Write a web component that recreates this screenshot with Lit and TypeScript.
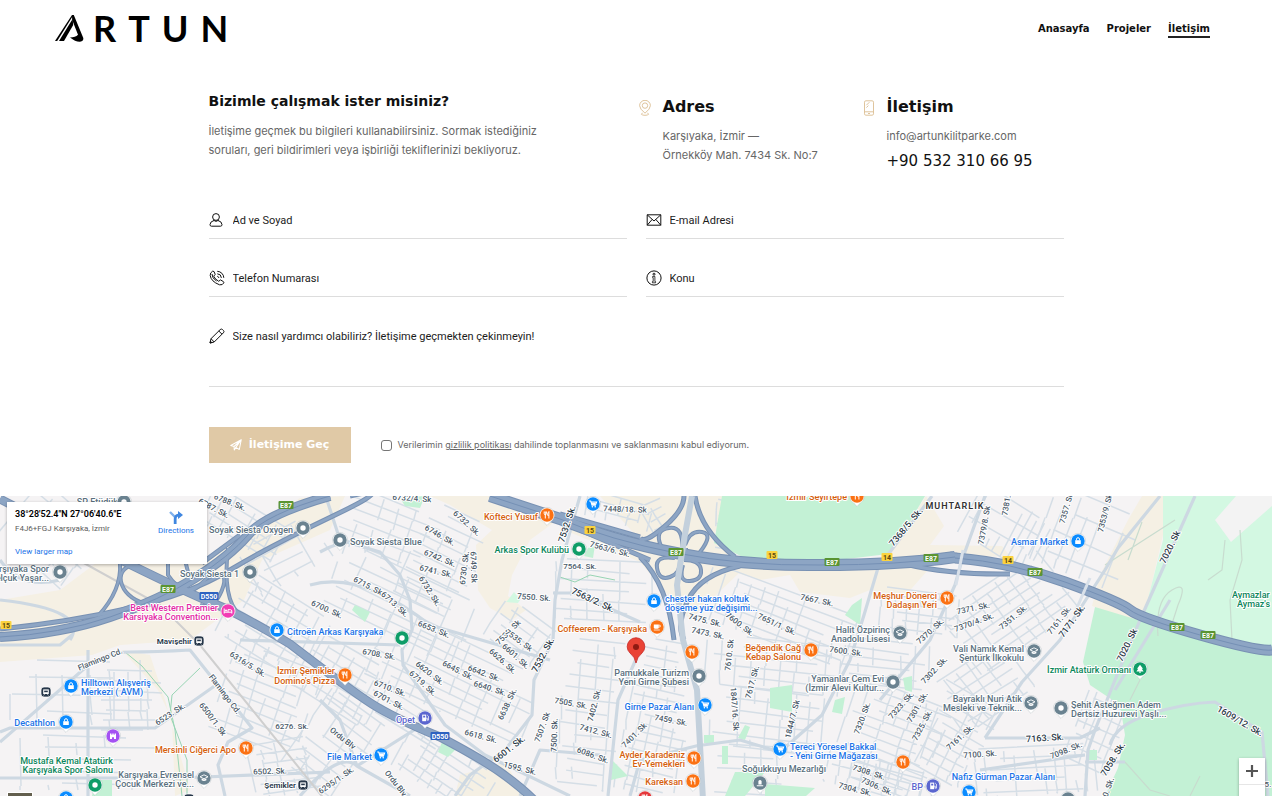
import { LitElement, html, css, svg } from "lit";
import { customElement } from "lit/decorators.js";

type Tone = "blue" | "orange" | "grey" | "green" | "pink" | "indigo" | "purple" | "red";
type Glyph = "bag" | "cart" | "fork" | "dot" | "school" | "bed" | "cup" | "fuel" | "tree" | "castle" | "grave";

const PIN_FILL: Record<Tone, string> = {
  blue: "#0a8bff", orange: "#fb7113", grey: "#6a8290", green: "#0f9d68",
  pink: "#f23cb4", indigo: "#5b66cf", purple: "#a451f2", red: "#e5383b",
};
const TEXT_FILL: Record<Tone, string> = {
  blue: "#1a73e8", orange: "#d5600d", grey: "#5a707e", green: "#0b855a",
  pink: "#e32aa5", indigo: "#5b66cf", purple: "#8a3fd6", red: "#c5221f",
};

const GLYPHS: Record<Glyph, unknown> = {
  bag: svg`<path d="M-2.8 -.8h5.6v3.8h-5.6z" fill="#fff"/><path d="M-1.5 -.8v-1a1.5 1.5 0 0 1 3 0v1" fill="none" stroke="#fff" stroke-width="1"/>`,
  cart: svg`<path d="M-3.8 -3h1.5l1.3 4.2h3.4l1.2-3.2h-5.2" fill="none" stroke="#fff" stroke-width="1.1"/><path d="M-1.6 -1.5h4.6l-.8 2.4h-3.2z" fill="#fff"/><circle cx="-.6" cy="2.8" r=".8" fill="#fff"/><circle cx="2.2" cy="2.8" r=".8" fill="#fff"/>`,
  fork: svg`<path d="M-2.8 -3.5v2.2q0 1 1.1 1t1.1-1v-2.2M-1.7 -3.5v7M1.9 3.5v-7q-1.3 1-1.3 3.8h1.3" fill="none" stroke="#fff" stroke-width="1"/>`,
  dot: svg`<circle r="2.7" fill="#fff"/>`,
  school: svg`<path d="M-4 -1.2l4-2 4 2-4 2z" fill="none" stroke="#fff" stroke-width=".9"/><path d="M-2.4 .5v1.7q2.4 1.6 4.8 0v-1.7l-2.4 1z" fill="#fff"/>`,
  bed: svg`<path d="M-3.8 -2.5v5M-3.8 1.2h7.6M3.8 2.5v-2.5q0-1.3-1.3-1.3h-2.5v2.3" fill="none" stroke="#fff" stroke-width="1"/><circle cx="-2" cy="-.6" r="1" fill="#fff"/>`,
  cup: svg`<path d="M-3.2 -2.5h5v2.7q0 1.5-1.5 1.5h-2q-1.5 0-1.5-1.5z" fill="#fff"/><path d="M1.8 -1.8h1.4v1.8h-1.4M-3.2 3h6" fill="none" stroke="#fff" stroke-width=".8"/>`,
  fuel: svg`<path d="M-2.8 -3.4h4v6.6h-4z" fill="#fff"/><path d="M-1.8 -2.3h2v1.8h-2z" fill="#5b66cf"/><path d="M1.2 .2h1v2h1.2v-4l-1.2-1.2" fill="none" stroke="#fff" stroke-width=".8"/>`,
  tree: svg`<path d="M0 -4.2l3 4h-1.2l1.8 2.6h-7.2l1.8-2.6h-1.2z" fill="#fff"/><path d="M-.6 2.2h1.2v1.8h-1.2z" fill="#fff"/>`,
  castle: svg`<path d="M-3 3v-5.5h1.4v1.2h.9v-1.2h1.4v1.2h.9v-1.2h1.4v5.5h-2v-1.6q-1-1-2 0v1.6z" fill="#fff"/>`,
  grave: svg`<path d="M-1.6 1.6v-3.6q1.6-2 3.2 0v3.6zM-3.2 2.2h6.4v1h-6.4z" fill="#fff"/>`,
};

const PINS: [number, number, Tone, Glyph][] = [
  [124, 502, "grey", "dot"], [303, 528, "grey", "dot"], [250, 572, "grey", "dot"], [60, 572, "grey", "dot"],
  [228, 611, "pink", "bed"], [277, 630, "blue", "bag"], [402, 638, "green", "dot"], [71, 686, "blue", "bag"],
  [66, 722, "blue", "bag"], [113, 736, "purple", "castle"], [246, 748, "orange", "fork"], [95, 785, "green", "dot"],
  [204, 778, "grey", "school"], [66, 798, "blue", "bag"], [345, 675, "orange", "fork"], [547, 515, "orange", "fork"],
  [340, 540, "grey", "dot"], [579, 549, "green", "dot"], [593, 504, "blue", "cart"], [657, 627, "orange", "cup"],
  [425, 718, "indigo", "fuel"], [381, 755, "blue", "cart"], [699, 676, "grey", "dot"], [705, 705, "blue", "cart"],
  [694, 758, "orange", "fork"], [693, 781, "orange", "fork"], [645, 798, "red", "fork"], [857, 496, "orange", "fork"],
  [654, 601, "blue", "bag"], [947, 598, "orange", "fork"], [900, 633, "grey", "school"], [692, 652, "orange", "fork"],
  [811, 650, "orange", "fork"], [893, 682, "grey", "dot"], [780, 749, "blue", "cart"], [903, 762, "orange", "fork"],
  [760, 783, "grey", "grave"], [933, 786, "indigo", "fuel"], [1078, 541, "blue", "bag"], [1034, 651, "grey", "school"],
  [1140, 669, "green", "tree"], [1031, 703, "grey", "school"], [1061, 708, "grey", "dot"], [969, 792, "blue", "cart"],
  [1068, 799, "grey", "dot"],
];

/* Place names: text, x, y, tone, anchor */
const PLACES: [string, number, number, Tone, "start" | "end" | "middle"][] = [
  ["SP Etüdük", 118, 505, "grey", "end"],
  ["Soyak Siesta Oxygen", 293, 533, "grey", "end"],
  ["Soyak Siesta 1", 239, 577, "grey", "end"],
  ["Karşıyaka Spor", 49, 572, "grey", "end"], ["Selçuk Yaşar...", 49, 581, "grey", "end"],
  ["Best Western Premier", 218, 611, "pink", "end"], ["Karsiyaka Convention...", 218, 620, "pink", "end"],
  ["Citroën Arkas Karşıyaka", 287, 635, "blue", "start"],
  ["Hilltown Alışveriş", 81, 686, "blue", "start"], ["Merkezi ( AVM)", 81, 695, "blue", "start"],
  ["Decathlon", 55, 726, "blue", "end"],
  ["Mersinli Ciğerci Apo", 236, 753, "orange", "end"],
  ["Mustafa Kemal Atatürk", 113, 764, "green", "end"], ["Karşıyaka Spor Salonu", 113, 773, "green", "end"],
  ["Karşıyaka Evrensel", 194, 778, "grey", "end"], ["Çocuk Merkezi ve...", 194, 787, "grey", "end"],
  ["İzmir Şemikler", 335, 674, "orange", "end"], ["Domino's Pizza", 335, 684, "orange", "end"],
  ["Köfteci Yusuf", 538, 520, "orange", "end"],
  ["Soyak Siesta Blue", 350, 545, "grey", "start"],
  ["Arkas Spor Kulübü", 569, 553, "green", "end"],
  ["Coffeerem - Karşıyaka", 647, 632, "orange", "end"],
  ["Opet", 415, 723, "indigo", "end"],
  ["File Market", 372, 760, "blue", "end"],
  ["Pamukkale Turizm", 689, 676, "grey", "end"], ["Yeni Girne Şubesi", 689, 685, "grey", "end"],
  ["Girne Pazar Alanı", 694, 710, "blue", "end"],
  ["Ayder Karadeniz", 685, 758, "orange", "end"], ["Ev-Yemekleri", 685, 767, "orange", "end"],
  ["Kareksan", 683, 785, "orange", "end"],
  ["İzmir Seyirtepe", 847, 500, "orange", "end"],
  ["chester hakan koltuk", 665, 602, "blue", "start"], ["döşeme yüz değişimi...", 665, 611, "blue", "start"],
  ["Meşhur Dönerci", 937, 599, "orange", "end"], ["Dadaşın Yeri", 937, 608, "orange", "end"],
  ["Halit Özpirinç", 890, 633, "grey", "end"], ["Anadolu Lisesi", 890, 642, "grey", "end"],
  ["Beğendik Cağ", 801, 651, "orange", "end"], ["Kebap Salonu", 801, 660, "orange", "end"],
  ["Yamanlar Cem Evi", 884, 682, "grey", "end"], ["(İzmir Alevi Kultur...", 884, 691, "grey", "end"],
  ["Tereci Yöresel Bakkal", 790, 750, "blue", "start"], ["- Yeni Girne Mağazası", 790, 759, "blue", "start"],
  ["Soğukkuyu Mezarlığı", 784, 772, "grey", "middle"],
  ["BP", 923, 790, "indigo", "end"],
  ["Asmar Market", 1068, 545, "blue", "end"],
  ["Aymazlar", 1232, 598, "green", "start"], ["Aymaz's", 1237, 607, "green", "start"],
  ["Vali Namık Kemal", 1024, 652, "grey", "end"], ["Şentürk İlkokulu", 1024, 661, "grey", "end"],
  ["İzmir Atatürk Ormanı", 1131, 673, "green", "end"],
  ["Bayraklı Nuri Atik", 1022, 702, "grey", "end"], ["Mesleki ve Teknik...", 1022, 711, "grey", "end"],
  ["Şehit Asteğmen Adem", 1071, 708, "grey", "start"], ["Dertsiz Huzurevi Yaşlı...", 1071, 717, "grey", "start"],
  ["Nafiz Gürman Pazar Alanı", 1055, 780, "blue", "end"],
];

/* Street names: text, centre x, centre y, angle */
const STREETS: [string, number, number, number][] = [
  ["6788. Sk.", 230, 502, 22], ["6787. Sk.", 214, 508, 28], ["Flamingo Cd.", 100, 659, -22], ["Flamingo Cd.", 225, 694, 53],
  ["6316/5. Sk.", 248, 664, 32], ["6523. Sk.", 170, 714, -33], ["6500/1. Sk", 213, 719, 53], ["6276. Sk.", 292, 726, 0],
  ["6502. Sk.", 270, 771, -2], ["6732/4. Sk", 412, 498, 4], ["6732. Sk.", 467, 523, 42], ["6746. Sk.", 440, 535, 30],
  ["6742. Sk.", 440, 558, 22], ["6741. Sk.", 436, 571, 13], ["6730. Sk.", 464, 568, -83], ["6749. Sk", 474, 567, 88],
  ["6732. Sk.", 430, 591, 58], ["6715. Sk.", 369, 586, 27], ["6713. Sk.", 395, 604, 42], ["6700. Sk.", 327, 609, 24],
  ["6653. Sk.", 434, 629, 22], ["7564. Sk.", 580, 566, 0], ["7563/6. Sk.", 610, 549, 15], ["7448/18. Sk", 625, 509, 2],
  ["7550. Sk.", 534, 597, 4], ["7539. Sk", 508, 632, -45], ["7535. Sk", 519, 640, 36],
  ["6708. Sk.", 379, 654, 10], ["6620. Sk.", 430, 673, 38], ["6645. Sk.", 458, 670, 27], ["6642. Sk.", 484, 673, 20],
  ["6626. Sk.", 503, 661, 42], ["6601. Sk.", 516, 656, 42], ["6710. Sk.", 390, 688, 20], ["6719. Sk.", 423, 683, 42],
  ["6701. Sk.", 389, 700, 28], ["6640. Sk.", 490, 688, 18], ["6638. Sk.", 507, 704, -65], ["7505. Sk.", 571, 703, 10],
  ["7402. Sk.", 594, 705, -76], ["7412. Sk.", 596, 731, 15], ["7507. Sk", 542, 727, -70], ["7500. Sk.", 554, 735, -88],
  ["6618. Sk.", 481, 736, 15], ["6086. Sk.", 593, 755, 20], ["1595. Sk.", 520, 768, 14], ["Ordu Blv", 343, 738, 38],
  ["Ordu Blv", 396, 783, 52], ["6295/1. Sk.", 336, 780, -35], ["7401. Sk", 634, 735, -45], ["7475. Sk.", 705, 620, 14],
  ["7600. Sk.", 740, 624, 38], ["7651/1. Sk.", 777, 624, 25], ["7473. Sk.", 708, 633, 12], ["7667. Sk.", 817, 600, 12],
  ["7370. Sk.", 930, 631, -42], ["7600. Sk.", 846, 651, 8], ["7610. Sk", 729, 655, -84], ["7617. Sk.", 752, 682, -75],
  ["1847/16. Sk", 735, 709, 86], ["7459. Sk.", 671, 720, 10], ["1844/7. Sk", 792, 719, -76], ["7302. Sk.", 934, 670, -46],
  ["7323. Sk.", 901, 705, -48], ["7301. Sk.", 917, 707, -60], ["7320. Sk.", 862, 718, -70], ["7325. Sk.", 922, 725, -62],
  ["7161. Sk.", 960, 737, -42], ["7308. Sk.", 869, 772, 18], ["7306. Sk.", 877, 786, 24], ["7304. Sk.", 855, 789, 14],
  ["7379/8. Sk", 984, 525, -80], ["7381. Sk", 1007, 500, -80], ["7357. Sk", 1066, 508, -74], ["7353/9. Sk.", 1105, 512, -76],
  ["7371. Sk.", 973, 608, -12], ["7370/4. Sk.", 974, 622, -20], ["7351. Sk.", 1013, 617, -40], ["7161. Sk.", 1059, 620, -52],
  ["7100. Sk.", 980, 754, -4], ["7098. Sk.", 1066, 750, -22], ["0. Sk.", 1108, 787, -70], ["5.", 1268, 784, 0],
];
const MAIN_STREETS: [string, number, number, number][] = [
  ["7532. Sk.", 567, 524, -72], ["7563/2. Sk.", 593, 600, 25], ["7532. Sk.", 543, 655, -62], ["6601. Sk.", 509, 749, -38],
  ["7368/5. Sk.", 906, 527, -50], ["7171. Sk.", 1072, 621, -54], ["7020. Sk", 1170, 547, -64], ["7020. Sk", 1127, 645, -64],
  ["7163. Sk.", 1045, 738, -4], ["7058. Sk.", 1113, 759, -58], ["1609/12. Sk.", 1240, 721, 30],
];

/* Shields: text, x, y, colour */
const SHIELDS: [string, number, number, string][] = [
  ["E87", 286, 505, "#5a9432"], ["E87", 168, 589, "#5a9432"], ["E87", 676, 552, "#5a9432"], ["E87", 832, 562, "#5a9432"],
  ["E87", 931, 558, "#5a9432"], ["E87", 1035, 572, "#5a9432"], ["E87", 1177, 627, "#5a9432"], ["E87", 1208, 635, "#5a9432"],
  ["D550", 209, 596, "#2d62c0"], ["D550", 440, 736, "#2d62c0"],
  ["15", 6, 625, "#fbd33f"], ["15", 590, 530, "#fbd33f"], ["15", 772, 555, "#fbd33f"], ["14", 887, 557, "#fbd33f"], ["14", 1008, 560, "#fbd33f"],
];

const SAND = [
  "M0 600L60 590 100 560 90 520 130 496H130L128 560 206 562 300 498 345 496 330 530 262 560 244 600 214 622 190 640 120 645 92 655 0 662z",
  "M430 496L500 496 560 518 530 540 512 575 508 596 526 610 512 620 490 608 478 590 476 545 492 530 450 505z",
  "M600 496H730L712 540 740 560 740 572 690 620 672 600 640 562 560 528 640 540z",
  "M715 566L960 558 935 562 905 596 870 590 850 598 800 592 790 575 760 580z",
  "M926 496L944 526 930 545 1002 546 1010 556 880 560 890 552z",
  "M1142 496H1163V535L1145 612 1135 622 1092 606 1100 575 1128 520z",
  "M122 650L150 655 165 700 190 790 175 796 172 720 158 690z",
  "M460 775L505 762 525 796 455 796z",
];
const GREEN = [
  "M722 496H925L905 530 888 554 830 561 745 558 714 543z",
  "M1095 607L1145 622 1195 637 1272 652V796H1105L1118 768 1125 735 1120 705 1090 685 1083 662z",
  "M770 688L792 685 792 712 770 708zM735 772L765 772 745 796H725zM765 784L815 788 806 796H765z",
  "M612 760L628 776 611 780zM442 742L455 750 448 757 438 752zM355 605L370 612 365 622 352 610z",
  "M852 605L862 598 860 625 845 615zM903 678L912 676 912 692 905 690zM835 700L845 697 842 714 832 712z",
  "M95 780H112V796H92zM400 498L425 496 420 508 405 506zM588 548L595 545 593 558 584 556z",
  "M745 725L750 727 745 740 738 738zM1089 750L1097 750 1097 760 1089 760zM704 735h10v8h-10zM722 746h6v18h-6z",
];
const MINT = ["M1163 496H1272V652L1195 637 1142 622 1163 540z", "M508 600L514 592 520 600 518 603 506 602z"];

/* Highways with their drawing width */
const HIGHWAYS: [string, number][] = [
  ["M0 637Q60 634 110 617T195 578 248 535 330 496", 9],
  ["M0 629Q70 622 130 608T230 570 335 515 350 496", 4],
  ["M0 499Q60 530 125 562T215 604 290 644Q350 690 372 704T440 737Q480 758 500 772T534 800", 8],
  ["M120 563Q122 590 98 616M135 563Q116 570 122 585T150 605M168 563V575Q185 600 200 585L210 575Q230 570 222 590T200 605M185 560L188 572M228 548Q222 600 240 615", 3],
  ["M202 563L240 535", 4],
  ["M490 496L560 519Q610 540 676 553T820 565Q900 565 955 557", 11],
  ["M955 558Q1010 562 1065 582T1130 610 1200 635 1272 650", 10],
  ["M950 554Q990 562 1020 570M905 564Q950 575 1010 574M560 514L640 537M580 530L650 560", 4],
  ["M684 496Q684 510 664 527T640 538M695 496Q700 530 735 557M640 557Q668 585 674 640M740 566Q700 575 688 600T684 640", 4],
  ["M682 550Q684 526 669 528T661 546M685 545Q690 530 702 532T700 552 686 548M675 558Q655 555 657 568T670 577 680 560M684 560Q700 560 701 570T690 581 683 565", 3],
];

const MAIN_ROADS = [
  "M327 500L340 540 380 552 400 575 410 600 412 630 402 650 403 665 445 725 485 755 570 796",
  "M580 496L562 560 555 600 553 640 534 680 532 715 505 750 470 775 455 796",
  "M640 650L618 700 608 796", "M1195 496L1140 620 1115 680 1095 730 1088 750 1085 796",
  "M1110 745Q1115 725 1150 714T1215 702L1262 732 1268 796", "M1160 496L1118 548 1105 570 1060 640 1022 682 985 738",
  "M932 496L905 532 878 568 864 615 850 660 822 715 780 752 740 740 703 745", "M985 496L962 560 955 585 930 640 880 700",
  "M0 742L85 668Q105 652 130 652T190 650L252 728 228 742 218 765 225 796", "M0 732L10 728H155L216 685",
  "M88 650V796", "M553 593H575L640 622", "M240 640L400 645", "M0 778H180L330 772", "M0 560Q20 590 60 580",
  "M300 796Q340 750 357 766L430 720M357 766L340 720 320 700M357 766L410 796",
  "M985 738H1080L1100 728M980 770L1085 755M1085 762L1125 762M1115 690L1170 600",
  "M0 600Q90 610 70 640M0 645H60L72 635", "M630 796L640 760 700 745M600 755L540 750 520 796",
  "M320 552Q350 535 370 545M310 585Q360 570 430 625L550 660",
];

/* Blocks of side streets: x, y, width, height, angle, column gap, row gap */
const BLOCKS: number[][] = [
  [340, 500, 100, 60, 20, 17, 11], [410, 510, 70, 100, 24, 24, 9], [325, 570, 150, 70, 25, 24, 9],
  [370, 640, 170, 75, 25, 17, 9], [300, 650, 90, 60, 30, 14, 10], [360, 700, 90, 28, 30, 12, 9],
  [395, 745, 100, 50, 33, 11, 9], [300, 700, 70, 90, 35, 20, 11], [555, 560, 100, 60, 2, 16, 10],
  [490, 610, 60, 45, 35, 14, 9], [560, 640, 60, 150, 5, 16, 12], [622, 690, 66, 105, 12, 12, 9],
  [700, 590, 165, 55, 20, 14, 9], [705, 640, 140, 50, 6, 15, 10], [710, 690, 125, 60, 6, 14, 12],
  [712, 745, 75, 50, 2, 16, 12], [830, 640, 100, 45, 5, 14, 9], [840, 690, 105, 100, 20, 12, 9],
  [825, 760, 110, 35, 14, 12, 8], [880, 590, 80, 45, 5, 13, 8], [920, 690, 70, 90, 28, 12, 10],
  [950, 575, 120, 75, -35, 13, 9], [965, 500, 80, 55, 30, 8, 18], [1040, 500, 100, 80, 22, 13, 22],
  [940, 655, 90, 60, -35, 14, 10], [975, 745, 120, 50, -4, 10, 11], [1075, 690, 50, 80, 22, 8, 13],
  [200, 505, 90, 40, 30, 12, 9], [225, 590, 100, 70, 30, 14, 10], [220, 655, 95, 90, 20, 15, 10],
  [250, 740, 70, 55, -10, 14, 10], [10, 660, 130, 60, 0, 26, 17], [20, 735, 150, 55, 0, 28, 12],
  [90, 670, 75, 60, 0, 19, 10], [585, 498, 70, 26, 15, 11, 9], [645, 500, 24, 30, -30, 10, 9],
  [715, 500, 20, 50, 5, 10, 8], [640, 640, 42, 50, 8, 12, 9], [10, 500, 90, 70, 40, 20, 14],
  [245, 530, 80, 50, -30, 20, 14],
];

/* Broken grid of side streets; the wobble keeps the blocks uneven but stable between renders. */
const blockPath = ([x, y, w, h, , gx, gy]: number[], seed: number): string => {
  let s = seed * 7919 + 13;
  const next = () => (s = (s * 1103515245 + 12345) % 2147483648) / 2147483648;
  let d = "";
  for (let cx = 0; cx <= w; cx += gx) {
    let cy = Math.floor(next() * gy);
    while (cy < h) {
      const len = gy * (1 + Math.floor(next() * 4));
      if (next() > 0.3) d += `M${x + cx} ${y + cy}L${x + cx + Math.round(next() * 2)} ${y + Math.min(h, cy + len)}`;
      cy += len;
    }
  }
  for (let cy = 0; cy <= h; cy += gy) {
    const a = Math.floor(next() * w * 0.3);
    const b = w - Math.floor(next() * w * 0.3);
    d += `M${x + a} ${y + cy}L${x + b} ${y + cy + Math.round(next() * 3)}`;
  }
  return d;
};

@customElement("city-map")
class CityMap extends LitElement {
  static styles = css`
    :host { display: block; position: relative; overflow: hidden; background: #f5f3f4; font-family: Roboto, sans-serif; }
    .canvas { position: absolute; inset: 0; width: 100%; height: 100%; }
    .place { font-size: 9px; font-weight: 500; }
    .street { font-size: 8px; font-weight: 500; fill: #4b5a69; text-anchor: middle; }
    .main { font-size: 9px; fill: #2b3947; }
    .halo { stroke: #fff; stroke-width: 2px; stroke-linejoin: round; paint-order: stroke; }
    .shield { font-size: 7px; font-weight: 700; text-anchor: middle; }
    .station { font-size: 8px; font-weight: 600; fill: #27374a; }
    .district { font-size: 9px; font-weight: 600; fill: #333; text-anchor: middle; letter-spacing: 1px; }
    .card {
      position: absolute; top: 6px; left: 7px; width: 200px; box-sizing: border-box; padding: 6px 8px 5px;
      background: #fff; box-shadow: 0 1px 3px rgba(0, 0, 0, 0.3); display: flex; justify-content: space-between;
    }
    .coords { margin: 0; font-size: 9px; line-height: 13px; font-weight: 600; color: #000; }
    .code { margin: 0 0 9px; font-size: 8px; line-height: 15px; color: #5b5b5b; }
    a { color: #1a73e8; text-decoration: none; font-size: 8px; line-height: 14px; }
    .larger { display: block; }
    .directions { display: flex; flex-direction: column; align-items: center; padding: 2px 5px 0 0; align-self: flex-start; }
    .directions svg { width: 14px; height: 14px; }
    .zoom {
      position: absolute; right: 7px; bottom: -14px; width: 26px; background: #fff;
      box-shadow: 0 1px 3px rgba(0, 0, 0, 0.3);
    }
    button { display: block; width: 26px; height: 26px; border: 0; padding: 0; background: none; cursor: pointer; }
    button + button { border-top: 1px solid #e6e6e6; }
    button svg { display: block; width: 12px; height: 12px; margin: auto; }
    .layers { position: absolute; left: 7px; bottom: -22px; width: 26px; height: 26px; background: #635f4e; border: 1px solid #fff; padding: 0; }
  `;

  private street([text, x, y, angle]: [string, number, number, number], main: boolean) {
    return svg`<text class="street halo ${main ? "main" : ""}" transform="translate(${x} ${y}) rotate(${angle})" y="3">${text}</text>`;
  }

  private pin([x, y, tone, glyph]: [number, number, Tone, Glyph]) {
    return svg`<g transform="translate(${x} ${y})">
      <path d="M-7.6 0A7.6 7.6 0 1 1 7.6 0Q7.4 4.4 2.8 7.6L0 10.4 -2.8 7.6Q-7.4 4.4 -7.6 0z" fill="#fff" stroke="#9aa5ad" stroke-opacity=".45" stroke-width=".7"/>
      <circle r="6.7" fill=${PIN_FILL[tone]} />${GLYPHS[glyph]}</g>`;
  }

  private station(x: number, y: number) {
    return svg`<g transform="translate(${x} ${y})"><rect x="-5" y="-5" width="10" height="10" rx="3" fill="#27374a" stroke="#fff" stroke-width=".7"/>
      <path d="M-2.8 -2.6h5.6v4.6h-5.6z" fill="#fff"/><path d="M-1.8 -1.4h3.6v1.6h-3.6z" fill="#27374a"/><path d="M-2.4 3.4l1-1.2M2.4 3.4l-1-1.2" stroke="#fff" stroke-width=".7"/></g>`;
  }

  render() {
    return html`
      <svg class="canvas" viewBox="0 496 1272 300" preserveAspectRatio="xMinYMin slice" role="img" aria-label="Karşıyaka, İzmir">
        ${SAND.map((d) => svg`<path d=${d} fill="#f5f0e4"/>`)}
        ${MINT.map((d) => svg`<path d=${d} fill="#d3f8e2"/>`)}
        <path d="M1215 520L1236 496H1272V506L1231 542z" fill="#f3f3f3" />
        ${BLOCKS.map((b, i) => svg`<path d=${blockPath(b, i + 1)} transform="rotate(${b[4]} ${b[0] + b[2] / 2} ${b[1] + b[3] / 2})" fill="none" stroke="#d5dee6" stroke-width="1.5"/>`)}
        ${GREEN.map((d) => svg`<path d=${d} fill="#c3f1d5"/>`)}
        <g fill="none" stroke="#98d5b4" stroke-width="1">
          <path d="M125 652L142 666 168 697 175 730 182 796M200 668L172 695 170 715 187 760V796M560 577L575 582 590 575 615 580" />
        </g>
        <g fill="none" stroke="#c8dccf" stroke-width="1.2">
          <path d="M1225 540L1222 570 1208 580M1240 530L1242 560 1230 600 1232 640M1158 636Q1155 600 1172 590T1178 605L1170 630M1105 565L1175 520M1128 560L1142 522M1140 680L1130 700M1125 762L1150 790 1170 796M1190 796L1200 776" />
        </g>
        <g fill="none" stroke="#cdd8e2" stroke-width="3.2" stroke-linejoin="round">
          ${MAIN_ROADS.map((d) => svg`<path d=${d}/>`)}
        </g>
        <path d="M82 562L160 605 200 645 325 800" fill="none" stroke="#cfcfcf" stroke-width="2" />
        ${HIGHWAYS.map(([d, w]) => svg`<path d=${d} fill="none" stroke="#7891b3" stroke-width=${w + 1}/>`)}
        ${HIGHWAYS.map(([d, w]) => svg`<path d=${d} fill="none" stroke="#8da5c4" stroke-width=${w - 1}/>`)}
        <g fill="none" stroke="#7590b5" stroke-width="1">
          <path d="M0 637Q60 634 110 617T195 578 248 535 330 496M490 496L560 519Q610 540 676 553T820 565Q900 565 955 557M955 558Q1010 562 1065 582T1130 610 1200 635 1272 650" />
        </g>
        <path d="M692 496L684 540 677 585 683 640 697 690 703 800" fill="none" stroke="#c3d0dc" stroke-width="6" />
        <path d="M963 550L956 585M1090 578L1076 610" stroke="#d8e0e9" stroke-width="3" />
        ${STREETS.map((s) => this.street(s, false))}
        ${MAIN_STREETS.map((s) => this.street(s, true))}
        ${SHIELDS.map(([t, x, y, c]) => {
          const w = t.length * 4 + 3;
          return svg`<rect x=${x - w / 2} y=${y - 4} width=${w} height="8" rx="1" fill=${c}/>
            <text class="shield" x=${x} y=${y + 3} fill=${t.length > 2 ? "#fff" : "#5c4a10"}>${t}</text>`;
        })}
        ${PLACES.map(([t, x, y, tone, anchor]) => svg`<text class="place halo" x=${x} y=${y} fill=${TEXT_FILL[tone]} text-anchor=${anchor}>${t}</text>`)}
        <text class="district halo" x="955" y="509">MUHTARLIK</text>
        <text class="station halo" x="192" y="644" text-anchor="end">Mavişehir</text>
        <text class="station halo" x="296" y="788" text-anchor="end">Şemikler</text>
        ${this.station(199, 641)} ${this.station(303, 785)} ${this.station(46, 692)} ${this.station(189, 799)}
        ${PINS.map((p) => this.pin(p))}
        <path d="M636 663Q635 657 630 653A8.8 8.8 0 1 1 642 653Q637 657 636 663z" fill="#ea4335" stroke="#c5221f" stroke-width=".8" />
        <circle cx="636" cy="647" r="3" fill="#8f1a12" />
      </svg>
      <div class="card">
        <div>
          <p class="coords">38°28'52.4"N 27°06'40.6"E</p>
          <p class="code">F4J6+FGJ Karşıyaka, İzmir</p>
          <a class="larger" href="#map">View larger map</a>
        </div>
        <a class="directions" href="#directions">
          <svg viewBox="0 0 14 14" aria-hidden="true">
            <path d="M1 2l5 5v7" fill="none" stroke="#7fb0ec" stroke-width="2.4" />
            <path d="M6.2 14V9q0-4 4-4" fill="none" stroke="#3f86e0" stroke-width="2.6" />
            <path d="M9 1l5 4-5 4z" fill="#3f86e0" />
          </svg>
          <span>Directions</span>
        </a>
      </div>
      <button class="layers" aria-label="Katmanlar"></button>
      <div class="zoom">
        <button aria-label="Yakınlaştır"><svg viewBox="0 0 12 12"><path d="M6 0v12M0 6h12" stroke="#555" stroke-width="2.2" /></svg></button>
        <button aria-label="Uzaklaştır"></button>
      </div>
    `;
  }
}

const ICONS = {
  user: svg`<circle cx="7" cy="5" r="3.4"/><path d="M5 8.5Q1.200 9.400 1 12.600q0 1.600 1.400 1.600h9.200q1.400 0 1.400-1.600Q12.800 9.400 9 8.500"/><path d="M4.400 8.200q2.600 2.400 5.200 0"/>`,
  mail: svg`<path d="M1.200 2.800h13.600v10.400H1.200zM1.200 2.800L8 9l6.800-6.200M1.200 13.200l5-5.800M14.800 13.200l-5-5.800"/>`,
  phone: svg`<path d="M3.600 1.200Q1 2.600 1.200 5.500 2 11.500 10.500 14.800 13.600 15.400 14.900 12.800L14.400 11.600 11.500 9.900 9.700 11.300Q6 9.300 4.700 6.200L6.200 4.400 5 1.500z"/><path d="M8.300 6.300a2 2 0 0 1 1.600 1.600M8.300 3.800a4.300 4.300 0 0 1 4.100 4.100M8.300 1.300a6.700 6.700 0 0 1 6.500 6.500"/><path d="M3 4q-.3 4 4.500 7"/>`,
  info: svg`<circle cx="8" cy="8" r="7.100"/><circle cx="8" cy="4.200" r="1"/><path d="M6.600 6.400h2.300v5.200h.7v1.200H6.400v-1.200h.8V7.600h-.6z" stroke-width=".8"/>`,
  pencil: svg`<path d="M1 15l1-4.300L11.200 1.600q1.200-1.100 2.400 0l.8.8q1.200 1.200 0 2.400L5.200 14z"/><path d="M9.800 3l3.200 3.200M2 10.700L5.200 14M1 15l1.800-.5-1.300-1.300z"/>`,
  marker: svg`<path d="M8 13.200Q2.600 8.800 2.600 5.700a5.400 5.400 0 0 1 10.800 0Q13.400 8.800 8 13.200z"/><circle cx="8" cy="5.600" r="2.700"/><path d="M5.600 13.200q-1.200.3-1.200.9 0 1.200 3.600 1.200t3.600-1.200q0-.6-1.200-.9"/>`,
  mobile: svg`<rect x="3.500" y=".8" width="9" height="14.400" rx="1.400"/><path d="M3.500 11.800h9M7 13.500h2M5.400 5.200l3-3M5.400 7.600l2-2"/>`,
  send: svg`<path d="M1 8.600L15 1l-2.600 13-4.600-2.800L15 1 5.400 10zM5.400 10l.3 4.600 2.100-3.400"/>`,
};

@customElement("app-root")
class AppRoot extends LitElement {
  static styles = css`
    :host {
      display: flex; flex-direction: column; min-height: 100vh; box-sizing: border-box; background: #fff; color: #111;
      --wide: "DejaVu Sans", Verdana, sans-serif; font-family: Inter, sans-serif; font-size: 11px;
    }
    .icon { width: 16px; height: 16px; flex: none; fill: none; stroke: currentColor; stroke-width: 1; stroke-linejoin: round; }
    header { display: flex; justify-content: space-between; align-items: flex-start; padding: 14px 62px 0 55px; height: 42px; }
    .logo { display: flex; align-items: center; color: #000; text-decoration: none; font: 700 36px/28px Lato, sans-serif; }
    .logo svg { width: 29px; height: 28px; margin-right: 9px; }
    .word { display: flex; gap: 12px; }
    nav { display: flex; gap: 17px; padding-top: 7px; }
    nav a { color: #111; text-decoration: none; font: 700 10px/15px var(--wide); border-bottom: 2px solid transparent; }
    nav a.current { border-color: #222; }
    main { width: calc(100% - 40px); max-width: 855px; margin: 0 auto; padding: 35px 0 33px; }
    .intro { display: grid; grid-template-columns: 428fr 224fr 203fr; min-height: 111px; }
    h1 { margin: 0 0 11px; font: 700 14px/20px var(--wide); }
    h2 { margin: 0 0 10px; font: 700 16px/20px var(--wide); }
    p { margin: 0; line-height: 19px; color: #666; }
    .contact { display: flex; gap: 10px; padding-top: 6px; }
    .contact .icon { color: #dfc49c; margin-top: 3px; }
    .contact a { display: block; color: #666; text-decoration: none; line-height: 19px; }
    .contact .tel { margin-top: 3px; color: #111; font: 400 15px/24px var(--wide); }
    form { display: grid; grid-template-columns: 1fr 1fr; gap: 21px 19px; }
    .field { display: flex; gap: 8px; align-items: flex-start; padding: 10px 0 9px; border-bottom: 1px solid #ddd; font-family: Roboto, sans-serif; line-height: 17px; }
    .field.full { grid-column: 1 / -1; }
    input, textarea { flex: 1; min-width: 0; border: 0; padding: 0; margin: 0; outline: 0; background: none; font: inherit; line-height: 17px; color: #111; resize: none; }
    input { height: 17px; }
    textarea { height: 49px; }
    ::placeholder { color: #1c1c1c; opacity: 1; }
    .actions { grid-column: 1 / -1; display: flex; align-items: center; gap: 30px; margin-top: 19px; }
    .submit { display: flex; align-items: center; justify-content: center; gap: 7px; width: 142px; height: 36px; padding: 0; border: 0; background: #e0c9a6; color: #fff; font: 700 11px/16px var(--wide); }
    .submit .icon { width: 12px; height: 12px; stroke-width: 1.4; }
    .consent { display: flex; align-items: center; gap: 6px; font-size: 9px; line-height: 14px; color: #666; }
    .consent input { flex: none; width: 11px; height: 11px; appearance: none; border: 1px solid #767676; border-radius: 3px; }
    .consent a { color: inherit; }
    city-map { flex: 1; min-height: 300px; }
  `;

  private icon(name: keyof typeof ICONS) {
    return html`<svg class="icon" viewBox="0 0 16 16" aria-hidden="true">${ICONS[name]}</svg>`;
  }

  render() {
    return html`
      <header>
        <a class="logo" href="#home" aria-label="Artun">
          <svg viewBox="0 0 29 28" aria-hidden="true">
            <path d="M0 27L17 1l1 .8L2.2 27z" />
            <path d="M4 27L17.600 5l.6 6L9 27z" />
            <path d="M17 1h1.800L28.300 24q.6 3-3.300 3.800-4.500.2-10-4.200 5.500-.2 8-2.800L17.200 6z" />
          </svg>
          <span class="word"><span>R</span><span>T</span><span>U</span><span>N</span></span>
        </a>
        <nav>
          <a href="#home">Anasayfa</a>
          <a href="#projects">Projeler</a>
          <a class="current" href="#contact">İletişim</a>
        </nav>
      </header>
      <main>
        <section class="intro">
          <div>
            <h1>Bizimle çalışmak ister misiniz?</h1>
            <p>İletişime geçmek bu bilgileri kullanabilirsiniz. Sormak istediğiniz<br />soruları, geri bildirimleri veya işbirliği tekliflerinizi bekliyoruz.</p>
          </div>
          <div class="contact">
            ${this.icon("marker")}
            <div>
              <h2>Adres</h2>
              <p>Karşıyaka, İzmir —<br />Örnekköy Mah. 7434 Sk. No:7</p>
            </div>
          </div>
          <div class="contact">
            ${this.icon("mobile")}
            <div>
              <h2>İletişim</h2>
              <a href="mailto:info@artunkilitparke.com">info@artunkilitparke.com</a>
              <a class="tel" href="tel:+905323106695">+90 532 310 66 95</a>
            </div>
          </div>
        </section>
        <form @submit=${(e: Event) => e.preventDefault()}>
          <label class="field">${this.icon("user")}<input type="text" name="name" aria-label="Ad ve Soyad" placeholder="Ad ve Soyad" /></label>
          <label class="field">${this.icon("mail")}<input type="email" name="email" aria-label="E-mail Adresi" placeholder="E-mail Adresi" /></label>
          <label class="field">${this.icon("phone")}<input type="tel" name="phone" aria-label="Telefon Numarası" placeholder="Telefon Numarası" /></label>
          <label class="field">${this.icon("info")}<input type="text" name="subject" aria-label="Konu" placeholder="Konu" /></label>
          <label class="field full">${this.icon("pencil")}<textarea name="message" aria-label="Mesaj" placeholder="Size nasıl yardımcı olabiliriz? İletişime geçmekten çekinmeyin!"></textarea></label>
          <div class="actions">
            <button class="submit" type="submit">${this.icon("send")}<span>İletişime Geç</span></button>
            <label class="consent"><input type="checkbox" name="consent" /><span>Verilerimin <a href="#privacy">gizlilik politikası</a> dahilinde toplanmasını ve saklanmasını kabul ediyorum.</span></label>
          </div>
        </form>
      </main>
      <city-map></city-map>
    `;
  }
}
